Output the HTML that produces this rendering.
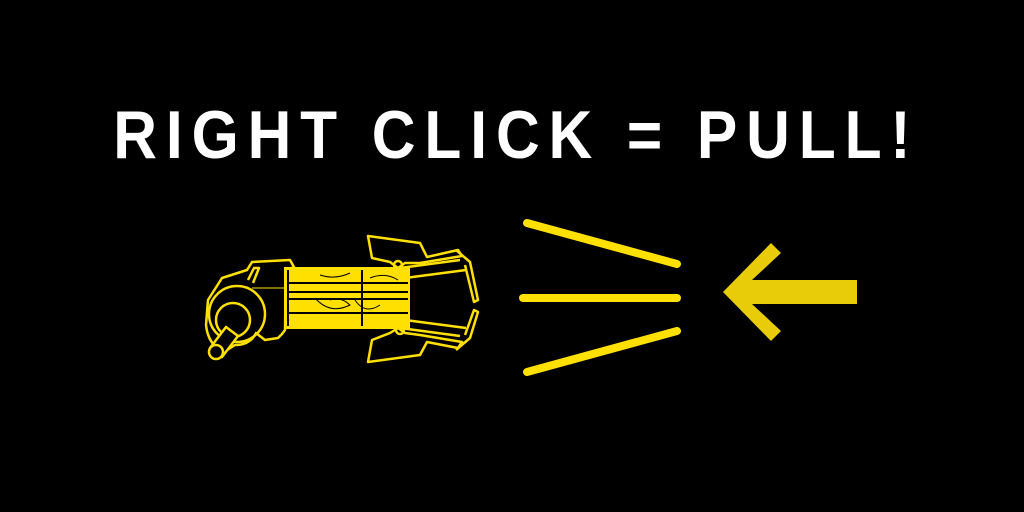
<!DOCTYPE html>
<html><head><style>
html,body{margin:0;padding:0;background:#000;width:1024px;height:512px;overflow:hidden}
.t{position:absolute;left:0;width:1024px;top:95px;text-align:center;color:#fff;font-family:"Liberation Sans",sans-serif;font-weight:bold;font-size:68px;letter-spacing:10px;line-height:80px;white-space:nowrap}
.t span{display:inline-block;transform:scaleX(0.89);padding-left:10px}
</style></head><body>
<div class="t"><span>RIGHT CLICK = PULL!</span></div>
<svg width="1024" height="512" style="position:absolute;left:0;top:0">
<g stroke="#FFE000" stroke-width="8" stroke-linecap="round">
<line x1="527" y1="223" x2="677" y2="264"/>
<line x1="523" y1="298" x2="677" y2="298"/>
<line x1="527" y1="372" x2="677" y2="331"/>
</g>
<polygon fill="#E8CC0A" points="723,292 771,243 781,253 752,280 857,280 857,304 752,304 781,331 771,341"/>
<g fill="none" stroke="#FFE000" stroke-width="2.5" stroke-linejoin="round">
<path d="M208,300 L222,278 L247,270 L252,262 L290,260 L294,267 L286,270 L285,330 L282,334 L278,338 L265,340 L256,333 Q250,345 235,345 L224,352 Q208,345 206,325 Z"/>
<path d="M248,280 L254,268 L259,268 L253,283"/>
<circle cx="237" cy="314" r="28"/>
<circle cx="233" cy="320" r="17"/>
<path d="M210,348 L226,327 L238,336 L222,357 Z" fill="#000"/>
<ellipse cx="216" cy="352" rx="7" ry="7" fill="#000"/>
<line x1="252" y1="288" x2="285" y2="288" stroke-width="1"/>
<path d="M368,236 L420,243 L427,257 L458,250 L462,256 L420,263 L405,263 L398,268 L390,262 L372,258 Z"/>
<path d="M456,250 L470,262 L478,300 L474,302 L465,265"/>
<path d="M400,268 L460,260 M405,278 L466,270"/>
<circle cx="398" cy="265" r="4"/>
<path d="M368,362 L420,355 L427,342 L458,348 L462,342 L420,335 L405,333 L398,328 L390,333 L372,340 Z"/>
<path d="M456,350 L470,338 L478,312 L474,310 L465,335"/>
<path d="M400,328 L460,336 M405,320 L466,328"/>
<circle cx="400" cy="330" r="4"/>
</g>
<rect x="285" y="268" width="124" height="60" fill="#FFE000" stroke="#FFE000" stroke-width="2"/>
<g stroke="#000" stroke-width="2">
<line x1="288" y1="283" x2="408" y2="283"/>
<line x1="288" y1="292" x2="408" y2="292"/>
<line x1="288" y1="299" x2="408" y2="299"/>
<line x1="288" y1="313" x2="408" y2="313"/>
<line x1="362" y1="270" x2="362" y2="326"/>
<line x1="288" y1="270" x2="288" y2="326"/>
</g>
<g fill="none" stroke="#000" stroke-width="1">
<path d="M315,298 Q330,315 350,305 Q340,296 330,300"/>
<path d="M370,278 Q385,272 398,280 M355,300 Q365,315 380,305 M320,275 Q335,280 350,273"/>
</g>
</svg>
</body></html>
